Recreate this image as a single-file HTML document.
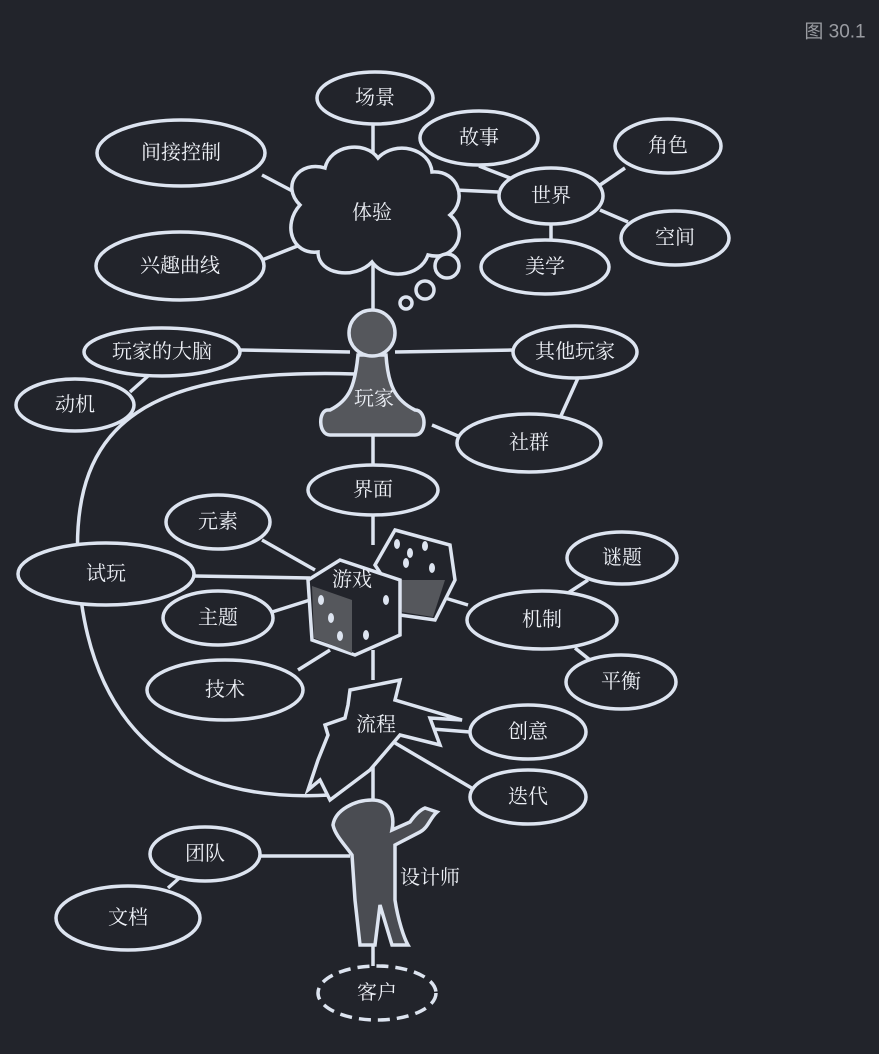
<!DOCTYPE html>
<html><head><meta charset="utf-8"><style>
html,body{margin:0;padding:0;background:#22242b;}
svg{display:block}
text{font-family:"Liberation Serif","Noto Serif CJK SC","Noto Sans CJK SC",serif;fill:#eef1f7;font-size:20px;text-anchor:middle;dominant-baseline:central}
</style></head><body>
<svg width="879" height="1054" viewBox="0 0 879 1054" xmlns="http://www.w3.org/2000/svg">
<rect width="879" height="1054" fill="#22242b"/>
<text x="835" y="32" style="font-family:'Liberation Sans','Noto Sans CJK SC',sans-serif;fill:#9a9ca2;font-size:19px">图 30.1</text>
<g stroke="#dde4f0" stroke-width="3.5" fill="none">
<line x1="373" y1="124" x2="373" y2="160"/>
<line x1="373" y1="265" x2="373" y2="315"/>
<line x1="373" y1="435" x2="373" y2="466"/>
<line x1="373" y1="515" x2="373" y2="545"/>
<line x1="373" y1="650" x2="373" y2="680"/>
<line x1="373" y1="750" x2="373" y2="800"/>
<line x1="373" y1="945" x2="373" y2="966"/>
<line x1="262" y1="175" x2="300" y2="195"/>
<line x1="262" y1="260" x2="300" y2="245"/>
<line x1="455" y1="190" x2="498" y2="192"/>
<line x1="479" y1="166" x2="510" y2="178"/>
<line x1="600" y1="185" x2="625" y2="168"/>
<line x1="600" y1="210" x2="628" y2="222"/>
<line x1="551" y1="224" x2="551" y2="240"/>
<line x1="240" y1="350" x2="350" y2="352"/>
<line x1="395" y1="352" x2="513" y2="350"/>
<line x1="130" y1="392" x2="148" y2="376"/>
<line x1="578" y1="378" x2="560" y2="418"/>
<line x1="432" y1="425" x2="458" y2="436"/>
<line x1="262" y1="540" x2="315" y2="570"/>
<line x1="194" y1="576" x2="310" y2="578"/>
<line x1="272" y1="612" x2="310" y2="600"/>
<line x1="298" y1="670" x2="330" y2="650"/>
<line x1="445" y1="598" x2="468" y2="605"/>
<line x1="588" y1="580" x2="568" y2="593"/>
<line x1="575" y1="648" x2="590" y2="660"/>
<line x1="420" y1="728" x2="470" y2="732"/>
<line x1="390" y1="740" x2="475" y2="790"/>
<line x1="260" y1="856" x2="350" y2="856"/>
<line x1="168" y1="888" x2="185" y2="873"/>
<path d="M355 374 C150 368 70 420 78 565 C85 710 160 805 330 795"/>
<g fill="#22242b">
<ellipse cx="375" cy="98" rx="58" ry="26"/>
<ellipse cx="181" cy="153" rx="84" ry="33"/>
<ellipse cx="479" cy="138" rx="59" ry="27"/>
<ellipse cx="668" cy="146" rx="53" ry="27"/>
<ellipse cx="551" cy="196" rx="52" ry="28"/>
<ellipse cx="675" cy="238" rx="54" ry="27"/>
<ellipse cx="545" cy="267" rx="64" ry="27"/>
<ellipse cx="180" cy="266" rx="84" ry="34"/>
<ellipse cx="162" cy="352" rx="78" ry="24"/>
<ellipse cx="575" cy="352" rx="62" ry="26"/>
<ellipse cx="75" cy="405" rx="59" ry="26"/>
<ellipse cx="529" cy="443" rx="72" ry="29"/>
<ellipse cx="373" cy="490" rx="65" ry="25"/>
<ellipse cx="218" cy="522" rx="52" ry="27"/>
<ellipse cx="106" cy="574" rx="88" ry="31"/>
<ellipse cx="622" cy="558" rx="55" ry="26"/>
<ellipse cx="218" cy="618" rx="55" ry="27"/>
<ellipse cx="542" cy="620" rx="75" ry="29"/>
<ellipse cx="225" cy="690" rx="78" ry="30"/>
<ellipse cx="621" cy="682" rx="55" ry="27"/>
<ellipse cx="528" cy="732" rx="58" ry="27"/>
<ellipse cx="528" cy="797" rx="58" ry="27"/>
<ellipse cx="205" cy="854" rx="55" ry="27"/>
<ellipse cx="128" cy="918" rx="72" ry="32"/>
<ellipse cx="377" cy="993" rx="59" ry="27" stroke-dasharray="12 7"/>
<path d="M300 205 C280 185 300 160 325 168 C330 145 365 140 378 158 C395 140 430 148 432 172 C458 170 468 200 450 215 C470 232 455 262 428 255 C420 278 385 280 372 262 C355 280 318 275 318 252 C292 255 282 225 300 205 Z"/>
<circle cx="447" cy="266" r="12"/>
<circle cx="425" cy="290" r="9"/>
<circle cx="406" cy="303" r="6"/>
<path fill="#55575c" d="M358 355 C355 385 350 400 330 410 L328 410 C318 410 318 435 330 435 L415 435 C427 435 427 410 415 410 C395 400 388 385 386 355 Z"/>
<circle cx="372" cy="333" r="23" fill="#55575c"/>
<path d="M395 530 L450 545 L455 580 L435 620 L400 615 L385 580 L375 565 Z" fill="#22242b"/>
<path d="M398 580 L445 580 L433 617 L402 612 Z" fill="#55575c" stroke="none"/>
<path d="M308 580 L340 560 L400 580 L400 635 L355 655 L312 640 Z"/>
<path d="M312 586 L352 600 L352 653 L314 638 Z" fill="#55575c" stroke="none"/>
<path d="M350 690 L400 680 L395 700 L462 720 L430 718 L440 745 L400 735 L370 770 L330 800 L320 780 L308 790 L318 760 L328 735 L325 725 L345 718 L348 705 Z"/>
<path fill="#4a4c52" d="M372 800 C390 800 395 815 392 830 L410 822 C415 815 420 810 425 808 L437 812 C430 818 428 828 420 832 L395 845 L395 900 C398 920 404 938 408 945 L392 945 L380 905 L375 945 L360 945 L355 900 L352 855 C345 845 335 835 333 825 C335 810 355 800 372 800 Z"/>
</g>
</g>
<g fill="#dde4f0">
<ellipse cx="397" cy="544" rx="3" ry="5"/><ellipse cx="410" cy="553" rx="3" ry="5"/><ellipse cx="425" cy="546" rx="3" ry="5"/><ellipse cx="406" cy="563" rx="3" ry="5"/><ellipse cx="432" cy="568" rx="3" ry="5"/>
<ellipse cx="321" cy="600" rx="3" ry="5"/><ellipse cx="331" cy="618" rx="3" ry="5"/><ellipse cx="340" cy="636" rx="3" ry="5"/>
<ellipse cx="386" cy="600" rx="3" ry="5"/><ellipse cx="366" cy="635" rx="3" ry="5"/>
</g>
<text x="375" y="98">场景</text>
<text x="181" y="153">间接控制</text>
<text x="479" y="138">故事</text>
<text x="668" y="146">角色</text>
<text x="551" y="196">世界</text>
<text x="675" y="238">空间</text>
<text x="545" y="267">美学</text>
<text x="180" y="266">兴趣曲线</text>
<text x="372" y="213">体验</text>
<text x="162" y="352">玩家的大脑</text>
<text x="575" y="352">其他玩家</text>
<text x="75" y="405">动机</text>
<text x="374" y="399">玩家</text>
<text x="529" y="443">社群</text>
<text x="373" y="490">界面</text>
<text x="218" y="522">元素</text>
<text x="106" y="574">试玩</text>
<text x="352" y="580">游戏</text>
<text x="622" y="558">谜题</text>
<text x="218" y="618">主题</text>
<text x="542" y="620">机制</text>
<text x="225" y="690">技术</text>
<text x="621" y="682">平衡</text>
<text x="376" y="725">流程</text>
<text x="528" y="732">创意</text>
<text x="528" y="797">迭代</text>
<text x="205" y="854">团队</text>
<text x="430" y="878">设计师</text>
<text x="128" y="918">文档</text>
<text x="377" y="993">客户</text>
</svg>
</body></html>
